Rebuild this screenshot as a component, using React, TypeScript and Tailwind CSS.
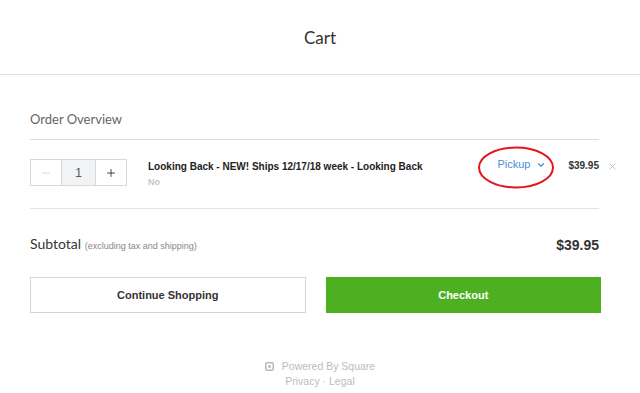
import { ChevronDown, X, Minus, Plus } from "lucide-react";

export default function App() {
  return (
    <main className="w-[640px] h-[393px] bg-white overflow-hidden relative font-['Liberation_Sans',sans-serif]">
      {/* Header */}
      <header className="h-[75px] border-b border-[#dedede] flex items-center justify-center">
        <h1 className="text-[17px] text-[#333] font-['Lato',sans-serif] mt-[2px]">Cart</h1>
      </header>

      <section className="pl-[30px] pr-[41px]">
        <div className="mt-[36px] pb-[12px] border-b border-[#dcdcdc]">
          <p className="text-[13px] leading-[16px] text-[#666] font-['Lato',sans-serif]">Order Overview</p>
        </div>

        {/* Item row */}
        <div className="pt-[19px] pb-[20px] border-b border-[#e4e4e4] flex items-start">
          <div className="flex h-[27px] border border-[#d8d8d8] shrink-0">
            <button className="w-[30px] flex items-center justify-center text-[#cfcfcf]">
              <Minus size={12} strokeWidth={1.5} />
            </button>
            <div className="w-[35px] flex items-center justify-center bg-[#f1f3f5] border-x border-[#d8d8d8] text-[12px] text-[#555]">1</div>
            <button className="w-[30px] flex items-center justify-center text-[#333]">
              <Plus size={12} strokeWidth={1.8} />
            </button>
          </div>
          <div className="ml-[21px] flex-1 pt-[1px]">
            <p className="text-[10px] leading-[13px] font-bold text-[#222]">Looking Back - NEW! Ships 12/17/18 week - Looking Back</p>
            <p className="text-[9px] leading-[12px] font-bold text-[#c4c4c4] mt-[3px]">No</p>
          </div>
          <div className="relative flex items-center gap-[6px] text-[#4a8fd6] text-[11px] leading-[13px] mr-[22px] -mt-[1px]">
            <span>Pickup</span>
            <ChevronDown size={10} strokeWidth={3} />
            <svg className="absolute -left-[20px] -top-[12px]" width="78" height="44" viewBox="0 0 78 44">
              <ellipse cx="39" cy="21.5" rx="37" ry="20" fill="none" stroke="#e3161e" strokeWidth="2" />
            </svg>
          </div>
          <p className="text-[10px] leading-[13px] font-bold text-[#333]">$39.95</p>
          <div className="w-[20px] -mr-[20px] flex justify-end pt-[2px] pr-[1px] text-[#bdbdbd]">
            <X size={11} strokeWidth={2} />
          </div>
        </div>

        {/* Subtotal */}
        <div className="mt-[25px] flex items-center justify-between leading-[20px]">
          <p className="text-[14px] text-[#333] font-['Lato',sans-serif]">
            Subtotal <span className="text-[9px] text-[#888] font-['Liberation_Sans',sans-serif]">(excluding tax and shipping)</span>
          </p>
          <p className="text-[14px] text-[#333] font-semibold">$39.95</p>
        </div>

        {/* Buttons */}
        <div className="mt-[21px] grid grid-cols-2 gap-[20px] -mr-[2px]">
          <button className="h-[36px] border border-[#d4d4d4] text-[11px] font-bold text-[#333]">Continue Shopping</button>
          <button className="h-[36px] bg-[#4cb021] text-[11px] font-bold text-white">Checkout</button>
        </div>
      </section>

      {/* Footer */}
      <footer className="mt-[46px] flex flex-col items-center text-[10.5px] leading-[15px] text-[#bcbcbc]">
        <div className="flex items-center gap-[8px]">
          <svg width="9" height="9" viewBox="0 0 9 9">
            <rect x="0.75" y="0.75" width="7.5" height="7.5" rx="1.5" fill="none" stroke="#b8b8b8" strokeWidth="1.5" />
            <rect x="3.25" y="3.25" width="2.5" height="2.5" fill="#b8b8b8" />
          </svg>
          <span>Powered By Square</span>
        </div>
        <p>Privacy · Legal</p>
      </footer>
    </main>
  );
}
